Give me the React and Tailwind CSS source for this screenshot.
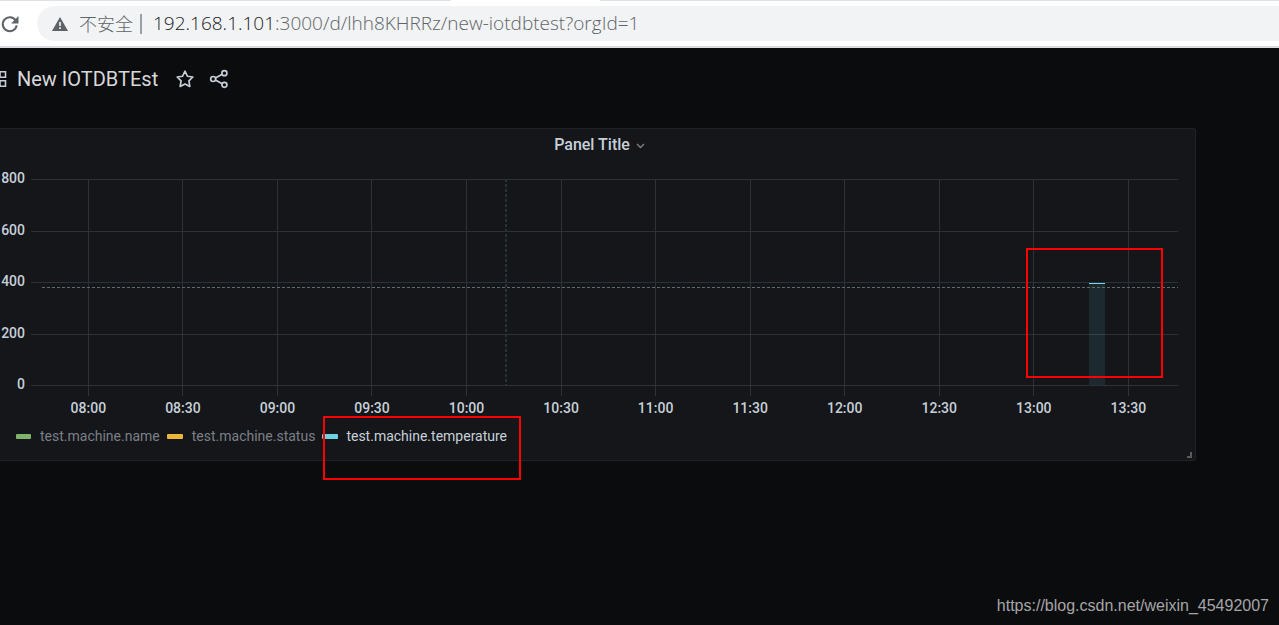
import { useState } from 'react';

const times = ['08:00', '08:30', '09:00', '09:30', '10:00', '10:30', '11:00', '11:30', '12:00', '12:30', '13:00', '13:30'];
const yTicks = [800, 600, 400, 200, 0];
const PLOT_HEIGHT = 206;

// percent of the plot width for the n-th half hour tick
const tickX = (i) => `${5 + i * 8.243}%`;
const valueY = (v) => Math.round(PLOT_HEIGHT - (v / 800) * PLOT_HEIGHT);

const BrowserBar = () => (
  <div className="h-12 bg-white border-b-2 border-[#dadce0]">
    <div className="h-px flex">
      <div className="w-[35.3%] bg-[#dee1e6]" />
      <div className="w-[11.6%]" />
      <div className="flex-1 bg-[#dee1e6]" />
    </div>
    <div className="flex items-center pt-[5px]">
      <button type="button" aria-label="Reload" className="w-[37px] shrink-0">
        <svg width="20" height="20" viewBox="0 0 20 20" fill="none">
          <path d="M15.6 6.3A7 7 0 1 0 16.7 11.4" stroke="#5f6368" strokeWidth="2.1" />
          <path d="M18.5 2v7.4h-7.4z" fill="#5f6368" />
        </svg>
      </button>
      <div className="flex-1 h-[35px] flex items-center pl-[15px] rounded-l-full bg-[#f1f3f4] whitespace-nowrap text-[#5f6368]">
        <svg width="16" height="14" viewBox="0 0 16 14" className="shrink-0">
          <path d="M8 0L16 14H0z" fill="#5f6368" />
          <path d="M7.2 5h1.7v4H7.2zM7.2 10.2h1.7v1.7H7.2z" fill="#f1f3f4" />
        </svg>
        <span className="ml-[11px] pb-[2px] text-lg font-light font-['Noto_Sans_CJK_SC',sans-serif]">不安全</span>
        <span className="mx-[7px] w-[2px] h-5 bg-[#9aa0a6]" />
        <a href="#" className="ml-1 text-[19px] font-light font-['Open_Sans',sans-serif]">
          <span className="text-[#202124]">192.168.1.101</span>:3000/d/lhh8KHRRz/new-iotdbtest?orgId=1
        </a>
      </div>
    </div>
  </div>
);

const Header = () => {
  const [starred, setStarred] = useState(false);

  return (
    <div className="flex items-center h-[62px] text-[#c7d0d9]">
      <svg width="7" height="18" viewBox="0 0 7 18" fill="none" stroke="currentColor" strokeWidth="1.6" className="shrink-0">
        <path d="M0 1.8h5.5v5.4H0zM0 10.8h5.5v5.4H0z" />
      </svg>
      <h1 className="ml-[10px] text-xl text-[#d8d9da]">New IOTDBTEst</h1>
      <button type="button" aria-label="Star" onClick={() => setStarred(!starred)} className="ml-[17px]">
        <svg width="20" height="20" viewBox="0 0 24 24" fill={starred ? 'currentColor' : 'none'} stroke="currentColor" strokeWidth="2" strokeLinejoin="round">
          <path d="M12 2.6l2.9 6.1 6.5.9-4.7 4.7 1.1 6.7L12 17.9l-5.8 3.1 1.1-6.7-4.7-4.7 6.5-.9z" />
        </svg>
      </button>
      <button type="button" aria-label="Share" className="ml-[14px]">
        <svg width="20" height="20" viewBox="0 0 24 24" fill="none" stroke="currentColor" strokeWidth="2">
          <circle cx="5" cy="12" r="3" />
          <circle cx="18.5" cy="5" r="3" />
          <circle cx="18.5" cy="19" r="3" />
          <path d="M7.7 10.7l8.1-4.3M7.7 13.3l8.1 4.3" />
        </svg>
      </button>
    </div>
  );
};

const Chart = () => (
  <div className="flex pr-[17px] text-sm font-medium text-[#c7d0d9]">
    <div className="w-[25px] h-[226px] mr-[6px] flex flex-col justify-between items-end leading-5">
      {yTicks.map((tick) => (
        <span key={tick}>{tick}</span>
      ))}
    </div>
    <svg height="230" className="flex-1 min-w-0 mt-[11px] overflow-visible">
      <g stroke="#2c3235" shapeRendering="crispEdges">
        {yTicks.map((tick) => (
          <line key={tick} x1="0" x2="100%" y1={valueY(tick)} y2={valueY(tick)} />
        ))}
        {times.map((time, i) => (
          <line key={time} x1={tickX(i)} x2={tickX(i)} y1="0" y2="217" />
        ))}
      </g>
      {times.map((time, i) => (
        <text key={time} x={tickX(i)} y="234" textAnchor="middle" fill="currentColor">{time}</text>
      ))}
      <rect x="92.25%" y="105" width="1.4%" height="101" fill="#70dbed" fillOpacity="0.1" />
      <rect x="92.25%" y="104" width="1.4%" height="1" fill="#70dbed" shapeRendering="crispEdges" />
      <line x1="11" x2="100%" y1="108" y2="108" stroke="#5e6c74" strokeDasharray="3 2" shapeRendering="crispEdges" />
      <line x1="41.4%" x2="41.4%" y1="0" y2="206" stroke="#293237" strokeWidth="2" strokeDasharray="3 2" shapeRendering="crispEdges" />
    </svg>
  </div>
);

const Legend = () => (
  <div className="flex gap-[7px] pl-4 pt-[17px] text-sm leading-5 text-[#7b8087]">
    <button type="button" className="flex items-center gap-[9px]">
      <span className="w-[15px] h-[5px] rounded-[1px] bg-[#7eb26d]" />test.machine.name
    </button>
    <button type="button" className="flex items-center gap-[9px]">
      <span className="w-4 h-[5px] rounded-[1px] bg-[#eab839]" />test.machine.status
    </button>
    <button type="button" className="relative flex items-center gap-2 text-[#c7d0d9]">
      <span className="w-4 h-[5px] rounded-[1px] bg-[#6ed0e0]" />test.machine.temperature
      <span className="absolute left-px -top-[10px] w-[198px] h-16 border-2 border-[#ff0000]" />
    </button>
  </div>
);

const App = () => (
  <div className="min-h-screen flex flex-col bg-[#0b0c0e] overflow-hidden font-[Roboto,sans-serif]">
    <BrowserBar />
    <Header />
    <main className="relative mt-[18px] mr-[83px] h-[333px] rounded-r-[3px] border border-l-0 border-[#202226] bg-[#141619]">
      <h2 className="flex items-center justify-center gap-[6px] h-8 pl-1 text-base font-medium text-[#c7d0d9]">
        Panel Title
        <svg width="9" height="6" viewBox="0 0 9 6" fill="none" className="mt-[2px]">
          <path d="M1 1l3.5 3.5L8 1" stroke="#7b8087" strokeWidth="1.4" />
        </svg>
      </h2>
      <div className="pt-[7px]">
        <Chart />
      </div>
      <Legend />
      <div className="absolute right-[3px] bottom-[2px] w-[5px] h-[6px] border-r-2 border-b-2 border-[#5b5b5c]" />
      <div className="absolute right-[32px] top-[119px] w-[137px] h-[130px] border-2 border-[#ff0000]" />
    </main>
    <footer className="mt-auto pr-[10px] pb-[7px] text-right text-base leading-6 text-[#a5a6a7] font-['Liberation_Sans',sans-serif]">
      <a href="#">https://blog.csdn.net/weixin_45492007</a>
    </footer>
  </div>
);

export default App;
